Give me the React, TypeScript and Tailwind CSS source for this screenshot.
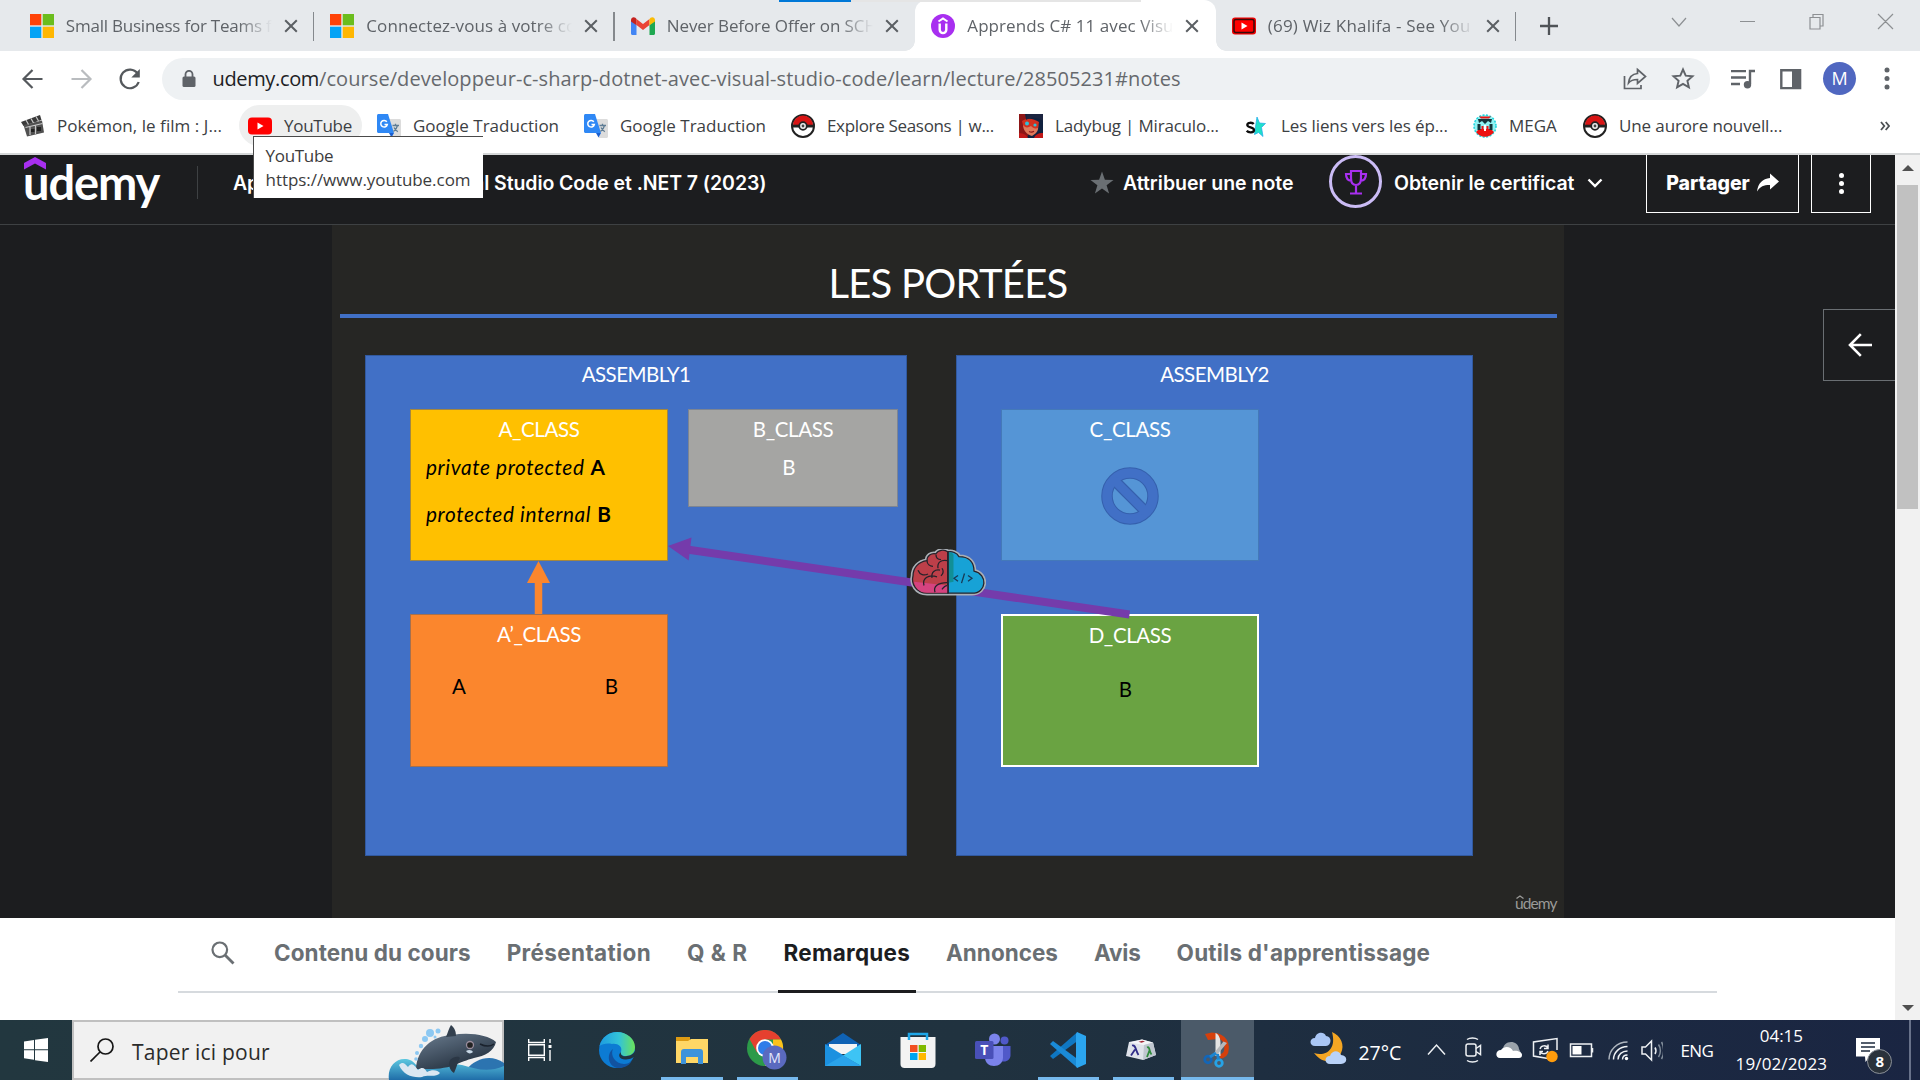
import type { ReactNode } from "react";

const SEGOE = "font-['Open_Sans','Noto_Sans',sans-serif]";
const UDEMY = "font-['Inter','Liberation_Sans',sans-serif]";
const SLIDE = "font-['Lato','Open_Sans',sans-serif]";

/* ---------- favicons ---------- */

function MicrosoftIcon() {
  return (
    <svg viewBox="0 0 24 24" className="size-6 shrink-0">
      <path fill="#ff4207" d="M0 0h11.3v11.3H0z" />
      <path fill="#6bbd1d" d="M12.7 0H24v11.3H12.7z" />
      <path fill="#04a3f5" d="M0 12.7h11.3V24H0z" />
      <path fill="#ffb703" d="M12.7 12.7H24V24H12.7z" />
    </svg>
  );
}

function GmailIcon() {
  return (
    <svg viewBox="0 0 24 24" className="size-6 shrink-0">
      <path fill="#4285f4" d="M0 6v13.5c0 .9.6 1.5 1.5 1.5h4V11z" />
      <path fill="#1fa851" d="M24 6v13.5c0 .9-.6 1.5-1.5 1.5h-4V11z" />
      <path fill="#ea4335" d="M5.500 11V5L12 10l6.500-5v6L12 16z" />
      <path fill="#c5221f" d="M0 6c0-2.400 2.600-3.600 4.400-2.200L5.500 5v6.200L0 7.500z" />
      <path fill="#fbbc04" d="M24 6c0-2.400-2.600-3.600-4.400-2.200L18.500 5v6.200L24 7.500z" />
    </svg>
  );
}

function UdemyIcon() {
  return (
    <svg viewBox="0 0 24 24" className="size-6 shrink-0">
      <circle cx="12" cy="12" r="12" fill="#a82ff0" />
      <path d="M7.500 7.500 12 4.500l4.500 3" fill="none" stroke="#fff" strokeWidth="2" />
      <path d="M8.700 9.500v6.300a3.300 3.300 0 0 0 6.600 0V9.500" fill="none" stroke="#fff" strokeWidth="2.400" />
    </svg>
  );
}

function YouTubeIcon({ dark = false }: { dark?: boolean }) {
  return (
    <svg viewBox="0 0 24 24" className="size-6 shrink-0">
      {dark ? (
        <>
          <rect x="0" y="3.500" width="24" height="17" rx="3" fill="#e00" />
          <rect x="2" y="5.500" width="20" height="13" rx="2" fill="#f00" stroke="#3a0a0a" strokeWidth="1.500" />
        </>
      ) : (
        <rect x="0" y="3.500" width="24" height="17" rx="4" fill="#f00" />
      )}
      <path fill="#fff" d="m9.500 8.500 6 3.500-6 3.500z" />
    </svg>
  );
}

function ClapperIcon() {
  return (
    <svg viewBox="0 0 24 24" className="size-6 shrink-0">
      <path fill="#3a3a3a" d="m0 8 19-7 1.500 5L2.500 12z" />
      <path fill="#505050" d="M2.500 11 21 6.500l2 12L6 22.500z" />
      <path stroke="#c8c8c8" strokeWidth="1.200" d="m5 6 2.500 4.500M10 4.500l2.500 4.500M15 2.500l2.500 4.500M4.500 13.500l17-4M9 13v8M14.500 11.500v8.500" />
      <path fill="#222" d="M10 15h3.500v3H10zM16 13h4v4h-4z" />
    </svg>
  );
}

function TranslateIcon() {
  return (
    <svg viewBox="0 0 24 24" className="size-6 shrink-0">
      <path fill="#dcdcdc" d="M9 5h13.500c.8 0 1.500.7 1.500 1.500v16c0 .8-.7 1.500-1.500 1.500H15z" />
      <path fill="#2f88f5" d="M1.500 0H11l6 19H1.500C.7 19 0 18.300 0 17.500v-16C0 .7.700 0 1.500 0z" />
      <path fill="#1a5fd0" d="m12 19 5 0-2.500 4.500z" />
      <path d="M15.500 11.500h6.500M18.500 9.800v1.700M20.500 11.500c-.6 2.500-2 4.500-4 6M17 13.500c.8 1.600 2 3 3.800 4.200" stroke="#5f7d95" strokeWidth="1.300" fill="none" />
      <path d="M9.800 7.800A3.300 3.300 0 1 0 10.300 10.500H7.500" stroke="#fff" strokeWidth="1.500" fill="none" />
    </svg>
  );
}

function PokeballIcon() {
  return (
    <svg viewBox="0 0 24 24" className="size-6 shrink-0">
      <circle cx="12" cy="12" r="11" fill="#fff" stroke="#222" strokeWidth="2" />
      <path fill="#d81414" d="M2 11.500a10 10 0 0 1 20 0z" />
      <path fill="#222" d="M1.500 10.700h21v2.800h-21z" />
      <circle cx="12" cy="12" r="3.800" fill="#eee" stroke="#222" strokeWidth="1.800" />
      <circle cx="12" cy="12" r="1.400" fill="#444" />
    </svg>
  );
}

function LadybugIcon() {
  return (
    <svg viewBox="0 0 24 24" className="size-6 shrink-0">
      <path fill="#10213f" d="M0 0h24v24H0z" />
      <path fill="#8d1616" d="M0 0h6l1 5 3 14-2 5H0z" />
      <path fill="#e0795a" d="M4 10c4-4 12-4 15 0 1 6-1 9-6 12-6-2-9-6-9-12z" />
      <path fill="#d3301f" d="M3 7c6-4 12-2 17 1l-1 6c-3 1-5 0-7-2-3 2-6 2-8-1z" />
      <path fill="#1b2440" d="M8 0h16v7C18 3 12 3 7 6z" />
      <circle cx="8" cy="9.500" r="2" fill="#2ec0d8" />
      <circle cx="16" cy="11" r="1.600" fill="#2ec0d8" />
      <path d="M10 17.500c2 1 3.500.8 5-.2" stroke="#8d1616" strokeWidth="1.200" fill="none" />
      <path fill="#c01818" d="M0 19c5 0 8 3 9 5H0zM15 24c1-3 4-5 9-5v5z" />
    </svg>
  );
}

function StarSIcon() {
  return (
    <svg viewBox="0 0 24 24" className="size-6 shrink-0">
      <path fill="#20e0c8" stroke="#1aa8ee" strokeWidth=".7" d="m12 3 2.500 6 6 .5-4 4 1.500 9-4.500-4-4 2 1-8z" />
      <path d="M8.700 10C7.500 8.300 2.300 8.100 2.300 11s6.700 2 6.700 5c0 3-5.500 3-7.300.8" fill="none" stroke="#0c0c0c" strokeWidth="2.300" />
    </svg>
  );
}

function MegaIcon() {
  return (
    <svg viewBox="0 0 24 24" className="size-6 shrink-0">
      <circle cx="12" cy="12" r="11" fill="#8ff2f2" stroke="#19d5dd" strokeWidth="1.500" strokeDasharray="2 1.500" />
      <path fill="#e11" d="M3 18a11 11 0 0 0 18 0l-3-3H6zM6 2.500h12l-2 2H8z" />
      <path fill="#12343a" d="M5 5h14l-1 4-3-2-3 3-3-3-3 2zM4.500 10h3v6h-3zM16.500 10h3v6h-3z" />
      <path fill="#e11" d="M8.500 12h2v5h-2zM13.500 12h2v5h-2z" />
      <path fill="#fff" d="M11 11h2v6h-2z" />
    </svg>
  );
}

/* ---------- browser chrome ---------- */

function CloseX() {
  return (
    <svg viewBox="0 0 14 14" className="size-[14px] shrink-0">
      <path d="m1.200 1.200 11.600 11.600M12.800 1.200 1.200 12.800" stroke="#5b5f63" strokeWidth="2" />
    </svg>
  );
}

type TabProps = { icon: ReactNode; title: string; tracking: string; active?: boolean; divider?: boolean };

function Tab({ icon, title, tracking, active, divider }: TabProps) {
  return (
    <div
      className={`relative flex h-[51px] w-[300.5px] shrink-0 items-center pl-[16px] ${
        active ? "rounded-t-[12px] bg-white" : ""
      }`}
    >
      {active && (
        <>
          <span className="absolute bottom-0 left-[-10px] size-[10px] bg-[radial-gradient(circle_at_0_0,transparent_9.500px,white_10px)]" />
          <span className="absolute right-[-10px] bottom-0 size-[10px] bg-[radial-gradient(circle_at_100%_0,transparent_9.500px,white_10px)]" />
        </>
      )}
      {icon}
      <span
        className={`ml-3 w-[207px] overflow-hidden text-[17px] leading-6 whitespace-nowrap text-[#5f6368] [mask-image:linear-gradient(to_right,black_172px,transparent_206px)] ${tracking}`}
      >
        {title}
      </span>
      <span className="ml-[11px]">
        <CloseX />
      </span>
      {divider && <span className="absolute top-[12px] right-0 h-[29px] w-[1.500px] bg-[#85898d]" />}
    </div>
  );
}

function TabStrip() {
  return (
    <div className="relative flex h-[51px] bg-[#e6e9ec] pl-[13.800px]">
      <span className="absolute top-0 left-[779px] h-[2px] w-[72px] bg-[#0078d7]" />
      <span className="absolute top-0 left-[851px] z-10 h-[2px] w-[290px] bg-[#e5e5e5]" />
      <Tab icon={<MicrosoftIcon />} title="Small Business for Teams from" tracking="tracking-[-0.220px]" divider />
      <Tab icon={<MicrosoftIcon />} title="Connectez-vous à votre compte" tracking="tracking-[0.080px]" divider />
      <Tab icon={<GmailIcon />} title="Never Before Offer on SCHOLAR" tracking="tracking-[-0.090px]" />
      <Tab icon={<UdemyIcon />} title="Apprends C# 11 avec Visual" tracking="tracking-[0.080px]" active />
      <Tab icon={<YouTubeIcon dark />} title="(69) Wiz Khalifa - See You Again" tracking="tracking-[0.200px]" divider />
      <svg viewBox="0 0 18 18" className="mt-[17px] ml-[24px] size-[18px]">
        <path d="M9 0v18M0 9h18" stroke="#4f5357" strokeWidth="2.300" />
      </svg>
      <svg viewBox="0 0 230 20" className="mt-[11px] ml-[112px] h-5 w-[230px]" fill="none" stroke="#8d9093" strokeWidth="1.200">
        <path d="m2 7 7 8 7-8M70 10.500h15M140 6.500h10V18h-10zM143 6.500V3.500h10V15h-3M208 3l15 15M223 3l-15 15" />
      </svg>
    </div>
  );
}

function Toolbar() {
  return (
    <div className="flex h-[52px] items-center bg-white pt-[3px]">
      <svg viewBox="0 0 130 24" className="ml-[20px] h-6 w-[130px]" fill="none" strokeWidth="2.200">
        <path d="M22.500 12H4.500M12.500 3l-9 9 9 9" stroke="#55595d" />
        <path d="M51.500 12h18M61.500 3l9 9-9 9" stroke="#b9bcbf" />
        <path d="M117.500 6.500a9.300 9.300 0 1 0 1.200 8.500" stroke="#55595d" />
        <path d="M119.800 2v8.500h-8.500z" fill="#55595d" />
      </svg>
      <div className="ml-[12px] flex h-[42px] w-[1548px] items-center rounded-full bg-[#eef1f3] pl-[20px]">
        <svg viewBox="0 0 14 18" className="h-[18px] w-[14px]">
          <rect x="0.500" y="6.500" width="13" height="10.500" rx="1.500" fill="#5f6368" />
          <path d="M3.500 7V4.300a3.500 3.500 0 0 1 7 0V7" fill="none" stroke="#5f6368" strokeWidth="1.800" />
        </svg>
        <span className="ml-[16.500px] text-[20px] leading-7 whitespace-nowrap text-[#66696d]">
          <span className="tracking-[-0.350px] text-[#202124]">udemy.com</span>
          <span className="tracking-[0.080px]">/course/developpeur-c-sharp-dotnet-avec-visual-studio-code/learn/lecture/28505231#notes</span>
        </span>
        <svg viewBox="0 0 72 24" className="mr-[15px] ml-auto h-6 w-[72px]" fill="none" stroke="#5f6368" strokeWidth="1.700">
          <path d="M1.500 9v12.500h16.500V18" />
          <path d="M14.500 2.500 22.500 9.500l-8 7v-4c-4 0-7 1-9 3.500.5-5 3.500-9 9-9.500z" />
          <path strokeWidth="1.900" d="m60 2.500 2.700 6.200 6.800.6-5.100 4.500 1.500 6.600-5.900-3.500-5.900 3.500 1.500-6.600-5.100-4.500 6.800-.6z" />
        </svg>
      </div>
      <svg viewBox="0 0 72 24" className="ml-[20px] h-6 w-[72px]">
        <path d="M1 4.200h15M1 10.500h15M1 17h9" stroke="#5f6368" strokeWidth="2.300" />
        <path d="M20 17V4h5" fill="none" stroke="#5f6368" strokeWidth="2.400" />
        <circle cx="17.500" cy="17.800" r="3.700" fill="#5f6368" />
        <path d="M51.300 3.300h18.800v17.800H51.300z" fill="none" stroke="#5f6368" strokeWidth="2.400" />
        <path d="M62 3h8v18h-8z" fill="#5f6368" />
      </svg>
      <div className="ml-[21px] flex size-[33px] items-center justify-center rounded-full bg-[#5067c0] text-[18px] text-white">M</div>
      <svg viewBox="0 0 6 26" className="ml-[28px] h-[26px] w-[6px]" fill="#5f6368">
        <circle cx="3" cy="4" r="2.500" />
        <circle cx="3" cy="12.500" r="2.500" />
        <circle cx="3" cy="21" r="2.500" />
      </svg>
    </div>
  );
}

function Bookmark({ icon, label, className }: { icon: ReactNode; label: string; className: string }) {
  return (
    <div className={`flex shrink-0 items-center gap-3 whitespace-nowrap ${className}`}>
      {icon}
      <span>{label}</span>
    </div>
  );
}

function BookmarksBar() {
  return (
    <div className="relative flex h-[52px] items-center border-b-2 border-[#d5d7d8] bg-white pb-[5px] pl-[21px] text-[17px] text-[#3c4043]">
      <span className="absolute top-[2px] left-[239px] h-[41px] w-[123px] rounded-full bg-[#eeefef]" />
      <Bookmark icon={<ClapperIcon />} label="Pokémon, le film : J..." className="w-[227px] tracking-[0.060px]" />
      <Bookmark icon={<YouTubeIcon />} label="YouTube" className="relative w-[129px] tracking-[-0.270px]" />
      <Bookmark icon={<TranslateIcon />} label="Google Traduction" className="w-[207px]" />
      <Bookmark icon={<TranslateIcon />} label="Google Traduction" className="w-[207px]" />
      <Bookmark icon={<PokeballIcon />} label="Explore Seasons | w..." className="w-[228px] tracking-[-0.330px]" />
      <Bookmark icon={<LadybugIcon />} label="Ladybug | Miraculo..." className="w-[226px] tracking-[-0.200px]" />
      <Bookmark icon={<StarSIcon />} label="Les liens vers les ép..." className="w-[228px] tracking-[-0.100px]" />
      <Bookmark icon={<MegaIcon />} label="MEGA" className="w-[110px]" />
      <Bookmark icon={<PokeballIcon />} label="Une aurore nouvell..." className="w-[297px] tracking-[-0.120px]" />
      <svg viewBox="0 0 10 10" className="size-[10px]" fill="none" stroke="#4d5154" strokeWidth="1.800">
        <path d="m1 1 3.300 4L1 9M5.700 1 9 5 5.700 9" />
      </svg>
      <div className="absolute top-[33px] left-[253px] z-20 h-[62px] w-[230px] border-t border-l border-[#4a4a4a] bg-white pt-[7px] pl-[11.500px] leading-6 text-[#3c3c3c]">
        <div className="tracking-[-0.300px]">YouTube</div>
        <div className="tracking-[-0.050px]">https://www.youtube.com</div>
      </div>
    </div>
  );
}

/* ---------- course page ---------- */

function CourseHeader() {
  return (
    <header className="flex h-[70px] items-start border-b border-[#3e4143] bg-[#1c1d1f] text-[19.500px] font-semibold text-white">
      <div className="relative ml-[23px] h-[60px] w-[138px]">
        <svg viewBox="0 0 22 13" className="absolute top-[2px] left-[1px] h-[13px] w-[22px]">
          <path fill="#a82ff0" d="M0 6 11 0l11 6v6.500L11 6.500 0 12.500z" />
        </svg>
        <div className="font-['Lato','Inter',sans-serif] text-[47px] leading-[55px] font-bold tracking-[-1.100px]">udemy</div>
      </div>
      <span className="mt-[11px] ml-[36px] h-[33px] w-px bg-[#3e4143]" />
      <h1 className="mt-[14px] ml-[35px] leading-7 tracking-[-0.080px] whitespace-nowrap">Apprends C# 11 avec Visual Studio Code et .NET 7 (2023)</h1>
      <div className="ml-auto flex items-start">
        <svg viewBox="0 0 24 24" className="mt-[16px] size-6">
          <path fill="#6a6f73" d="m12 .5 2.900 8.200 8.600.2-6.900 5.300 2.500 8.400-7.100-5-7.100 5 2.500-8.400L.5 8.900l8.600-.2z" />
        </svg>
        <span className="mt-[14px] ml-[9px] w-[172px] leading-7 whitespace-nowrap">Attribuer une note</span>
        <span className="ml-[34px] flex size-[53px] items-center justify-center rounded-full border-[3px] border-[#cbbcf5]">
          <svg viewBox="0 0 24 28" className="h-7 w-6" fill="none" stroke="#a82ff0" strokeWidth="2.200">
            <path d="M7 3h10v7c0 4-1.500 7-5 7s-5-3-5-7zM7 6H2c0 4 1.500 6.500 5.500 7M17 6h5c0 4-1.500 6.500-5.500 7M12 17v8M6 25.500h12" />
          </svg>
        </span>
        <span className="mt-[14px] ml-[12px] w-[182px] leading-7 tracking-[-0.080px] whitespace-nowrap">Obtenir le certificat</span>
        <svg viewBox="0 0 16 10" className="mt-[23px] ml-[11px] h-[10px] w-4">
          <path d="m1.500 1.500 6.500 6.500 6.500-6.500" fill="none" stroke="#fff" strokeWidth="2.400" />
        </svg>
        <div className="ml-[43px] flex h-[58px] w-[153px] justify-center gap-[7px] border border-t-0 border-white pt-[14px] leading-7 font-extrabold">
          <span className="tracking-[-0.050px]">Partager</span>
          <svg viewBox="0 0 22 20" className="mt-[4px] h-5 w-[22px]">
            <path fill="#fff" d="M13 0.500 22 8.500l-9 8v-4.600C7 11.800 3.500 13 0 18.500 1 10.500 5.500 5.500 13 5z" />
          </svg>
        </div>
        <div className="mr-[24px] ml-[12px] flex h-[58px] w-[60px] flex-col items-center gap-[3px] border border-t-0 border-white pt-[18px]">
          <span className="size-[5px] rounded-full bg-white" />
          <span className="size-[5px] rounded-full bg-white" />
          <span className="size-[5px] rounded-full bg-white" />
        </div>
      </div>
    </header>
  );
}

/* Diagram nodes sit on a free 1232 x 693 canvas. */
function Node({ className, label, children }: { className: string; label: string; children?: ReactNode }) {
  return (
    <div className={`absolute border text-center ${className}`}>
      <div className="pt-[4.500px] leading-7 tracking-[-0.380px]">{label}</div>
      {children}
    </div>
  );
}

function BrainCloud() {
  return (
    <svg viewBox="0 0 76 52" preserveAspectRatio="none" className="absolute top-[324px] left-[578px] h-[50px] w-[76px]">
      <path
        d="M38 3c-4-3-10-2-12 2-5-1-9 2-9 7C9 13 3 19 3 28c-2 8 3 18 14 18h45c15 0 16-20 2-23C64 15 60 8 49 8 47 4 42 2 38 3z"
        fill="none"
        stroke="#aab0b6"
        strokeWidth="4.500"
      />
      <path d="M38 3c-4-3-10-2-12 2-5-1-9 2-9 7C9 13 3 19 3 28c-2 8 3 18 14 18h21z" fill="#bd3f49" stroke="#26232b" strokeWidth="1.300" />
      <path d="M38 3c4-1 9 1 11 5 11 0 15 7 15 15 14 3 13 23-2 23H38z" fill="#17a2d6" stroke="#26232b" strokeWidth="1.300" />
      <path d="M4 34l34 4v7.500H17C9 45.500 5 40 4 34z" fill="#d54380" />
      <path d="M38.500 3.500c2 0 4 .5 5 2.500v28l-5 1z" fill="#118f96" />
      <path
        d="M17 12c0 4 3 6 6 6M26 6c0 4 3 5 5 5M37 12c-6-1-10 2-9 8M8 22c2 5 6 6 10 4M14 38c-2-7 4-12 13-9M22 30c-1-6 3-9 8-8M25 45c-2-6 3-10 12-10M32 42c2-3 3-4 5-4M31 28c2-2 3-5 1-8"
        fill="none"
        stroke="#26232b"
        strokeWidth="1.300"
      />
      <path d="M38 2v44" stroke="#26232b" strokeWidth="1.600" />
      <path d="m48 27.500-4 3 4 3M58 27.500l4 3-4 3M54.500 25.500l-3 10" fill="none" stroke="#173a55" strokeWidth="1.300" />
    </svg>
  );
}

function Slide() {
  return (
    <div className={`relative h-[693px] w-[1232px] shrink-0 bg-[#262624] text-[20.500px] text-white ${SLIDE}`}>
      <h2 className="pt-[30px] text-center text-[40px] leading-[56px] tracking-[-0.750px]">LES PORTÉES</h2>
      <div className="mx-auto mt-[3px] h-[4px] w-[1217px] bg-[#4170c6]" />

      <div className="absolute top-[130px] left-[33px] h-[501px] w-[542px] border border-[#31599f] bg-[#4170c6] pt-[4px] text-center leading-7 tracking-[-0.550px]">
        ASSEMBLY1
      </div>
      <div className="absolute top-[130px] left-[624px] h-[501px] w-[517px] border border-[#31599f] bg-[#4170c6] pt-[4px] text-center leading-7 tracking-[-0.550px]">
        ASSEMBLY2
      </div>

      <Node label="A_CLASS" className="top-[184px] left-[78px] h-[152px] w-[258px] border-[#a3863f] bg-[#ffc000]">
        <div className="pt-[10.500px] pl-[15px] text-left text-[20.800px] leading-7 tracking-[0.620px] text-black">
          <em>private protected</em> <b>A</b>
        </div>
        <div className="pt-[19px] pl-[15px] text-left text-[20.800px] leading-7 tracking-[0.620px] text-black">
          <em>protected internal</em> <b>B</b>
        </div>
      </Node>
      <Node label="B_CLASS" className="top-[184px] left-[356px] h-[98px] w-[210px] border-[#7d8593] bg-[#a5a5a3]">
        <div className="pt-[10px] pr-[8px] leading-7">B</div>
      </Node>
      <Node label="A’_CLASS" className="top-[389px] left-[78px] h-[153px] w-[258px] border-[#a5704e] bg-[#fb862d]">
        <div className="flex justify-between pt-[24.500px] pr-[49px] pl-[41px] leading-7 text-black">
          <span>A</span>
          <span>B</span>
        </div>
      </Node>
      <Node label="C_CLASS" className="top-[184px] left-[669px] h-[152px] w-[258px] border-[#4479b9] bg-[#5595d6]">
        <svg viewBox="0 0 60 60" className="mx-auto mt-[23px] size-[60px]">
          <circle cx="30" cy="30" r="23" fill="none" stroke="#3560ad" strokeWidth="11.500" />
          <path d="m16 16 28 28" stroke="#3560ad" strokeWidth="11" />
          <circle cx="30" cy="30" r="23" fill="none" stroke="#4170c6" strokeWidth="9.500" />
          <path d="m14 14 32 32" stroke="#4170c6" strokeWidth="8.800" />
        </svg>
      </Node>
      <Node label="D_CLASS" className="top-[389px] left-[669px] h-[153px] w-[258px] border-2 border-white bg-[#6aa342]">
        <div className="pt-[26px] pr-[9px] leading-7 text-black">B</div>
      </Node>

      <svg viewBox="0 0 1232 693" className="absolute inset-0 size-full">
        <path d="M206.500 389v-34" stroke="#fb862d" strokeWidth="7.500" />
        <path d="m206.500 336 11.500 22h-23z" fill="#fb862d" />
        <path d="M797.500 389.500 355 324.500" stroke="#753bab" strokeWidth="8" />
        <path d="m336 321 23.500-8.500-2.800 23z" fill="#753bab" />
      </svg>
      <BrainCloud />

      <div className="absolute top-[668px] left-[1183px] text-[15.500px] leading-5 tracking-[-0.900px] text-[#9a9a98]">
        udemy
        <svg viewBox="0 0 8 4" className="absolute top-[1.500px] left-[0.500px] h-[4px] w-2">
          <path d="m.5 3.500 3.500-2.500 3.500 2.500" fill="none" stroke="#9a9a98" strokeWidth="1.300" />
        </svg>
      </div>
    </div>
  );
}

function CourseTabs() {
  return (
    <nav className="h-[102px] bg-white">
      <div className="ml-[178px] flex h-[75px] w-[1539px] border-b-2 border-[#d6dade] pl-[33px] text-[22.500px] font-bold text-[#6a6f73]">
        <svg viewBox="0 0 24 24" className="mt-[23px] h-6 w-6" fill="none" stroke="#6a6f73">
          <circle cx="8.800" cy="8.800" r="7.300" strokeWidth="2.200" />
          <path d="m14 14 8.500 8.500" strokeWidth="2.800" />
        </svg>
        <div className="ml-[39px] flex gap-9 pt-[19px] leading-8 whitespace-nowrap">
          <span className="tracking-[0.070px]">Contenu du cours</span>
          <span className="tracking-[0.350px]">Présentation</span>
          <span className="tracking-[0.500px]">Q &amp; R</span>
          <span className="relative tracking-[0.240px] text-[#1c1d1f]">
            Remarques
            <span className="absolute top-[53px] -right-[6px] -left-[6px] h-[3px] bg-[#1c1d1f]" />
          </span>
          <span>Annonces</span>
          <span className="tracking-[-0.200px]">Avis</span>
          <span className="tracking-[0.200px]">Outils d'apprentissage</span>
        </div>
      </div>
    </nav>
  );
}

function Scrollbar() {
  return (
    <div className="flex w-[25px] shrink-0 flex-col items-center bg-[#f1f1f1]">
      <svg viewBox="0 0 12 6" className="mt-[10px] h-[6px] w-3">
        <path fill="#505050" d="M0 6 6 0l6 6z" />
      </svg>
      <div className="mt-[14px] h-[324px] w-[21px] bg-[#c1c1c1]" />
      <svg viewBox="0 0 12 6" className="mt-auto mb-[9px] h-[6px] w-3">
        <path fill="#505050" d="M0 0h12L6 6z" />
      </svg>
    </div>
  );
}

/* ---------- taskbar ---------- */

function Orca() {
  return (
    <svg viewBox="0 0 116 56" className="absolute -right-[2px] -bottom-[2px] h-[56px] w-[116px]">
      <defs>
        <linearGradient id="sea" x2="0" y2="1">
          <stop offset="0" stopColor="#5cc8e0" />
          <stop offset="1" stopColor="#1f6da8" />
        </linearGradient>
        <linearGradient id="skin" x2=".7" y2="1">
          <stop offset="0" stopColor="#6b7d90" />
          <stop offset="1" stopColor="#202c3a" />
        </linearGradient>
      </defs>
      <path fill="#2c74b0" d="M78 46c10-12 25-16 38-7v17H78z" />
      <path fill="url(#sea)" d="M1 56c-2-12 6-22 17-21 10 1 8 9 20 9 20 0 22-6 36-3 14 4 26 8 42 1v14z" />
      <path fill="url(#skin)" d="M28 45c1-20 16-33 36-34 18-3 36 0 44 7-2 9-11 14-22 16-4 1-10 3-19 7-14 5-28 4-39 4z" />
      <path fill="#33404e" d="M58 13c2-5 3-9 5-12 4 3 5 7 5 11z" />
      <path fill="#2b3745" d="M62 36c4-4 9-4 10-2-3 5-3 9-6 15-4-2-6-8-4-13z" />
      <path d="M92 20c6 3 10 3 14 0" stroke="#1a222d" strokeWidth="1.500" fill="none" />
      <circle cx="82" cy="21" r="3.500" fill="#222" stroke="#9a8d9c" strokeWidth="1.300" />
      <path fill="#c8d8e6" d="M78 27c3-2 6-1 7 1-2 2-5 2-7-1z" />
      <path fill="#dbe7f1" d="M11 41c4-4 6-1 9 2 4-6 7-1 10 3 5-4 7-1 9 2 5-3 11-2 13 1-4 5-12 1-18 4-9 1-19-2-23-12z" />
      <g fill="#8cc8f2">
        <circle cx="42" cy="9" r="4" />
        <circle cx="50" cy="7" r="2.500" />
        <circle cx="37" cy="15" r="3" />
        <circle cx="33" cy="22" r="2.200" />
        <circle cx="29" cy="29" r="2" />
        <circle cx="28" cy="35" r="1.800" />
        <circle cx="47" cy="13" r="1.500" />
      </g>
    </svg>
  );
}

function EdgeIcon() {
  return (
    <svg viewBox="0 0 36 36" className="size-9">
      <defs>
        <linearGradient id="edgeTop" x2="1">
          <stop offset="0" stopColor="#1d9be0" />
          <stop offset=".55" stopColor="#33c3d8" />
          <stop offset="1" stopColor="#6be35a" />
        </linearGradient>
      </defs>
      <circle cx="18" cy="18" r="18" fill="#0c7bd3" />
      <path fill="url(#edgeTop)" d="M.5 14C3 5 10 0 18 0c10 0 18 7 18 15 0 6-4 9-9 9-4 0-6-2-5-4 2-6-4-9-9-8C8 11 3 12 .5 14z" />
      <path fill="#1152a0" d="M14 17c-3 6 2 15 11 15 3 0 6-1 8-3-4 6-9 7-14 7C9 35 7 22 14 17z" />
      <path fill="#20343e" d="M22 20c-1 3 2 5 6 4 4 0 7-3 8-5v5c-2 2-4 3-9 3.500-6 .5-9-4-5-7.500z" />
    </svg>
  );
}

function ExplorerIcon() {
  return (
    <svg viewBox="0 0 36 36" className="size-9">
      <path fill="#dd9b13" d="M2 5h14v6H2z" />
      <path fill="#ffd766" d="M2 9h12l3-2h17v24H2z" />
      <path fill="#3d93db" d="M7 20c0-2 1-3 3-3h16c2 0 3 1 3 3v12h-5v-7H12v7H7z" />
    </svg>
  );
}

function ChromeIcon() {
  return (
    <svg viewBox="0 0 40 40" className="size-10">
      <circle cx="18" cy="18" r="18" fill="#2c9a49" />
      <path fill="#e5402f" d="M2.500 9A18 18 0 0 1 34 9.500H18l-8 13z" />
      <path fill="#fcc21b" d="M34 9.500A18 18 0 0 1 18 36l8-14V9.500z" />
      <circle cx="18" cy="18" r="8.800" fill="#fff" />
      <circle cx="18" cy="18" r="7" fill="#2f7de9" />
      <circle cx="27.500" cy="27.500" r="12" fill="#5a6abf" />
      <text x="27.500" y="32.500" textAnchor="middle" fontSize="14" fill="#e4e8fb" className="font-['Open_Sans']">
        M
      </text>
    </svg>
  );
}

function MailIcon() {
  return (
    <svg viewBox="0 0 36 36" className="size-9">
      <path fill="#0f62b4" d="M0 13 18 1l18 12v6H0z" />
      <path fill="#f4f4f4" d="M4 12h28v10H4z" />
      <path fill="#1c91e0" d="M0 12v22h36z" />
      <path fill="#3dc4f5" d="M36 12v22L18 23.500z" />
      <path fill="#2aa3ea" d="m0 34 18-10.500L36 34z" />
    </svg>
  );
}

function StoreIcon() {
  return (
    <svg viewBox="0 0 36 36" className="size-9">
      <path d="M9 7V2h18v5" fill="none" stroke="#1fa7e8" strokeWidth="2.500" />
      <path fill="#f3f3f3" d="M.5 5h35v27c0 2.500-1.500 4-4 4h-27c-2.500 0-4-1.500-4-4z" />
      <path d="M9 8V5M27 8V5" stroke="#1fa7e8" strokeWidth="2.500" />
      <path fill="#f25022" d="M10 13h7.500v7H10z" />
      <path fill="#7fba00" d="M18.700 13h7.300v7h-7.300z" />
      <path fill="#00a4ef" d="M10 21h7.500v7H10z" />
      <path fill="#ffb900" d="M18.700 21h7.300v7h-7.300z" />
    </svg>
  );
}

function TeamsIcon() {
  return (
    <svg viewBox="0 0 36 36" className="size-9">
      <circle cx="29.500" cy="8.500" r="4" fill="#5059c9" />
      <path fill="#5059c9" d="M24 14h11.500v9c0 4-3 6.500-6.500 6.500h-4z" />
      <circle cx="19.500" cy="7" r="5.500" fill="#7b83eb" />
      <path fill="#7b83eb" d="M10 14h18v11.500c0 5-4 8.500-9 8.500s-9-3.500-9-8.500z" />
      <rect x="0" y="9" width="18.500" height="18" rx="1.500" fill="#4950b8" />
      <text x="9.200" y="23" textAnchor="middle" fontSize="14" fontWeight="700" fill="#fff" className="font-['Open_Sans']">
        T
      </text>
    </svg>
  );
}

function CodeIcon() {
  return (
    <svg viewBox="0 0 36 36" className="size-9">
      <path fill="#0f77c2" d="m0 24 3 3 24.500-18V0z" />
      <path fill="#1a8ad6" d="m0 12 3-3 24.500 18v9z" />
      <path fill="#2ba5ef" d="M27 0 36 4v28l-9 4-1-2V2z" />
    </svg>
  );
}

function LambdaCubeIcon() {
  return (
    <svg viewBox="0 0 36 36" className="mr-[6px] size-9">
      <path fill="#dfe3ea" d="m6 10 13-2.500 11 3L33 23l-13 5L3 24z" />
      <path fill="#f4f5f8" d="m6.500 10.500 12.500-3 11 3-9 2.500z" />
      <path fill="#bfc6cf" d="m21 13 9-2.500L33 23l-13 5z" />
      <path d="M9 13.500c4-1 3.500 5 6.500 9.500M12 17.500 8 23.500" stroke="#2f2c88" strokeWidth="1.800" fill="none" />
      <path d="M24 15.500c3-1.500 2 4 4.500 7M26.500 18.500 24 25" stroke="#2f8a3c" strokeWidth="1.800" fill="none" />
      <path fill="#a52836" d="m15.500 9.800 4-1 2.500.7-3.500 1.200z" />
    </svg>
  );
}

function SnippingIcon() {
  return (
    <svg viewBox="0 0 36 36" className="size-9">
      <path d="M8 4.500c8-4 18 1 18.500 10 .5 6-2 9.500-7 10" fill="none" stroke="#d6400c" strokeWidth="4.500" />
      <path fill="#d6400c" d="M5 2 12 .5 17 2v5l-9 1z" />
      <path fill="#e4e4e4" d="M15.500 1c4 2 5 6 5 11v12h-5z" />
      <path fill="#b5b8bb" d="m27 11-11 13-2-3L23.500 9.500z" />
      <circle cx="8" cy="27.500" r="3.300" fill="none" stroke="#1366b8" strokeWidth="2.800" />
      <circle cx="19" cy="31" r="3.300" fill="none" stroke="#26a3e6" strokeWidth="2.800" />
      <path d="m10 25 6-4M18.500 27.500l-1-5.500" stroke="#1c86d2" strokeWidth="3" />
    </svg>
  );
}

function AppSlot({ children, running, active }: { children: ReactNode; running?: boolean; active?: boolean }) {
  return (
    <div className={`relative flex h-[60px] shrink-0 items-center justify-center ${active ? "w-[73px] bg-[#4b5a69]" : "w-[75.300px]"}`}>
      {children}
      {running && <span className={`absolute bottom-0 h-[3px] bg-[#76b9ed] ${active ? "inset-x-0" : "inset-x-[7px]"}`} />}
    </div>
  );
}

function Tray() {
  return (
    <svg viewBox="0 0 236 40" className="h-10 w-[236px]" fill="none" stroke="#eef1f4" strokeWidth="1.500">
      <path d="m1 24.500 8.500-9.500 8.500 9.500" />
      <rect x="39" y="14" width="10" height="12" rx="2" />
      <path d="m49 18.500 4.500-3v9l-4.500-3M40 9.500c3-2 8-2 11 0M40 30.500c3 2 8 2 11 0" />
      <g stroke="none">
        <path fill="#9ba3ab" d="M76 21c-1-11 15-12 16-2l3 6H75z" />
        <path fill="#fff" d="M73 28c-5 0-5-8 1-8 4-5 10-3 12 1 4-1 9 1 9 4 0 2-1 3-3 3z" />
      </g>
      <path d="M121 28.500 106.500 26V12L130 8.500V20" />
      <path d="M113 19c1-4 6-4 8-1M121 14.500v4h-4M121 21c-2 4-6 3-8 1M113 25v-3.500h3" />
      <circle cx="125" cy="26.500" r="5.700" fill="#ff9c0c" stroke="none" />
      <path d="M143.500 14h21v12.500h-21zM165.500 18v4.500" />
      <path fill="#fff" stroke="none" d="M145.500 16h9v8.500h-9z" />
      <g strokeWidth="1.400">
        <path d="M182 29.500C182 20 190 12 200.500 12" stroke="#aeb6bf" />
        <path d="M186.500 29.500c0-7 6-13 14-13M191 29.500c0-5 4-8.500 9.500-8.500M195.500 29.500c0-3 2-4.500 5-4.500" />
      </g>
      <circle cx="199.500" cy="28.500" r="1.700" fill="#fff" stroke="none" />
      <path d="M215 17h3.500l6-6v19l-6-6H215z" />
      <path d="M228 17.500c1.200 2 1.200 4.500 0 6.500" />
      <path d="M231.500 14.500c2.500 3.500 2.500 9 0 12.500M234.500 12c3 5 3 12 0 17" stroke="#808c99" />
    </svg>
  );
}

function Taskbar() {
  return (
    <footer className={`flex h-[60px] items-center bg-gradient-to-r from-[#22373f] via-[#20323f] to-[#1a2542] text-white ${SEGOE}`}>
      <div className="flex w-[72px] justify-center">
        <svg viewBox="0 0 24 24" className="size-6" fill="#fff">
          <path d="M0 3.500 10 2v9.300H0zM11 1.800 24 0v11.300H11zM0 12.300h10v9.400L0 20.300zM11 12.300h13V24l-13-1.800z" />
        </svg>
      </div>
      <div className="relative flex h-[60px] w-[432px] items-center border-2 border-[#c0c0c0] bg-[#f1f1f1] pl-[16px]">
        <svg viewBox="0 0 24 24" className="size-6" fill="none" stroke="#161616" strokeWidth="1.700">
          <circle cx="15.500" cy="8.500" r="7.500" />
          <path d="M10 14 .5 23.500" />
        </svg>
        <span className="mt-[5px] ml-[18px] text-[21px] tracking-[0.200px] text-[#2b2b2b]">Taper ici pour</span>
        <Orca />
      </div>
      <div className="flex w-[75px] justify-center pr-[3px]">
        <svg viewBox="0 0 24 24" className="size-6" fill="none" stroke="#fff" strokeWidth="1.400">
          <path d="M.7 1v3.500h15.600V1M.7 6.700h15.600v10.600H.7zM.7 23v-3.500h15.600V23M22 1v4M22 12v11" />
          <path d="M20.500 7h3v3h-3z" fill="#fff" stroke="none" />
        </svg>
      </div>
      <AppSlot>
        <EdgeIcon />
      </AppSlot>
      <AppSlot running>
        <ExplorerIcon />
      </AppSlot>
      <AppSlot running>
        <ChromeIcon />
      </AppSlot>
      <AppSlot>
        <MailIcon />
      </AppSlot>
      <AppSlot>
        <StoreIcon />
      </AppSlot>
      <AppSlot>
        <TeamsIcon />
      </AppSlot>
      <AppSlot running>
        <CodeIcon />
      </AppSlot>
      <AppSlot running>
        <LambdaCubeIcon />
      </AppSlot>
      <AppSlot running active>
        <SnippingIcon />
      </AppSlot>
      <svg viewBox="0 0 38 36" className="mb-[4px] ml-[56px] h-9 w-[38px]">
        <path fill="#f5a623" d="M22 2c9 4 13 13 9 21C27 32 14 36 4 23c11 4 23-3 18-21z" />
        <path fill="#a9c6f5" d="M5 16c-6 0-6-8 0-8C6 2 14 1 16 6c6 0 6 9 0 10z" />
        <path fill="#b9d2f8" d="M20 34c-6 0-6-8 0-8 2-6 9-6 11-1 7 0 7 9 0 9z" />
      </svg>
      <span className="mt-[5px] ml-[10px] w-[44px] text-[19.500px] whitespace-nowrap">27°C</span>
      <div className="ml-[25px]">
        <Tray />
      </div>
      <span className="mt-[2px] ml-[17px] w-[34px] text-[17px] tracking-[-0.500px]">ENG</span>
      <div className="ml-[18px] flex w-[98px] flex-col items-center text-[17px] leading-7">
        <span>04:15</span>
        <span className="tracking-[0.130px]">19/02/2023</span>
      </div>
      <div className="relative ml-[26px] h-[60px] w-[53px]">
        <svg viewBox="0 0 26 26" className="absolute top-[18px] left-0 h-[26px] w-[26px]">
          <path fill="#fff" d="M0 0h24v18.500H14L9.500 24l-.5-5.500H0z" />
          <path d="M5 5h14M5 9h14M5 13h9" stroke="#1c2a3d" strokeWidth="1.300" />
        </svg>
        <span className="absolute top-[29px] left-[11px] flex size-[25px] items-center justify-center rounded-full border border-[#8a9098] bg-[#2a323b] text-[15px] font-bold">
          8
        </span>
      </div>
      <span className="h-[60px] w-[2px] bg-[#68728a]" />
    </footer>
  );
}

export default function App() {
  return (
    <div className={`flex h-[1080px] w-[1920px] flex-col overflow-hidden bg-white ${SEGOE}`}>
      <TabStrip />
      <Toolbar />
      <BookmarksBar />
      <main className={`flex h-[865px] ${UDEMY}`}>
        <div className="w-[1895px]">
          <CourseHeader />
          <div className="relative flex h-[693px] bg-[#1c1d1f] pl-[332px]">
            <Slide />
            <button className="absolute top-[84px] right-0 flex h-[72px] w-[72px] items-center justify-center border border-r-0 border-[#6a6f73]">
              <svg viewBox="0 0 24 24" className="size-6" fill="none" stroke="#fff" strokeWidth="2.600">
                <path d="M24 12H2.500M12.800 1.200 2 12l10.800 10.800" />
              </svg>
            </button>
          </div>
          <CourseTabs />
        </div>
        <Scrollbar />
      </main>
      <Taskbar />
    </div>
  );
}
